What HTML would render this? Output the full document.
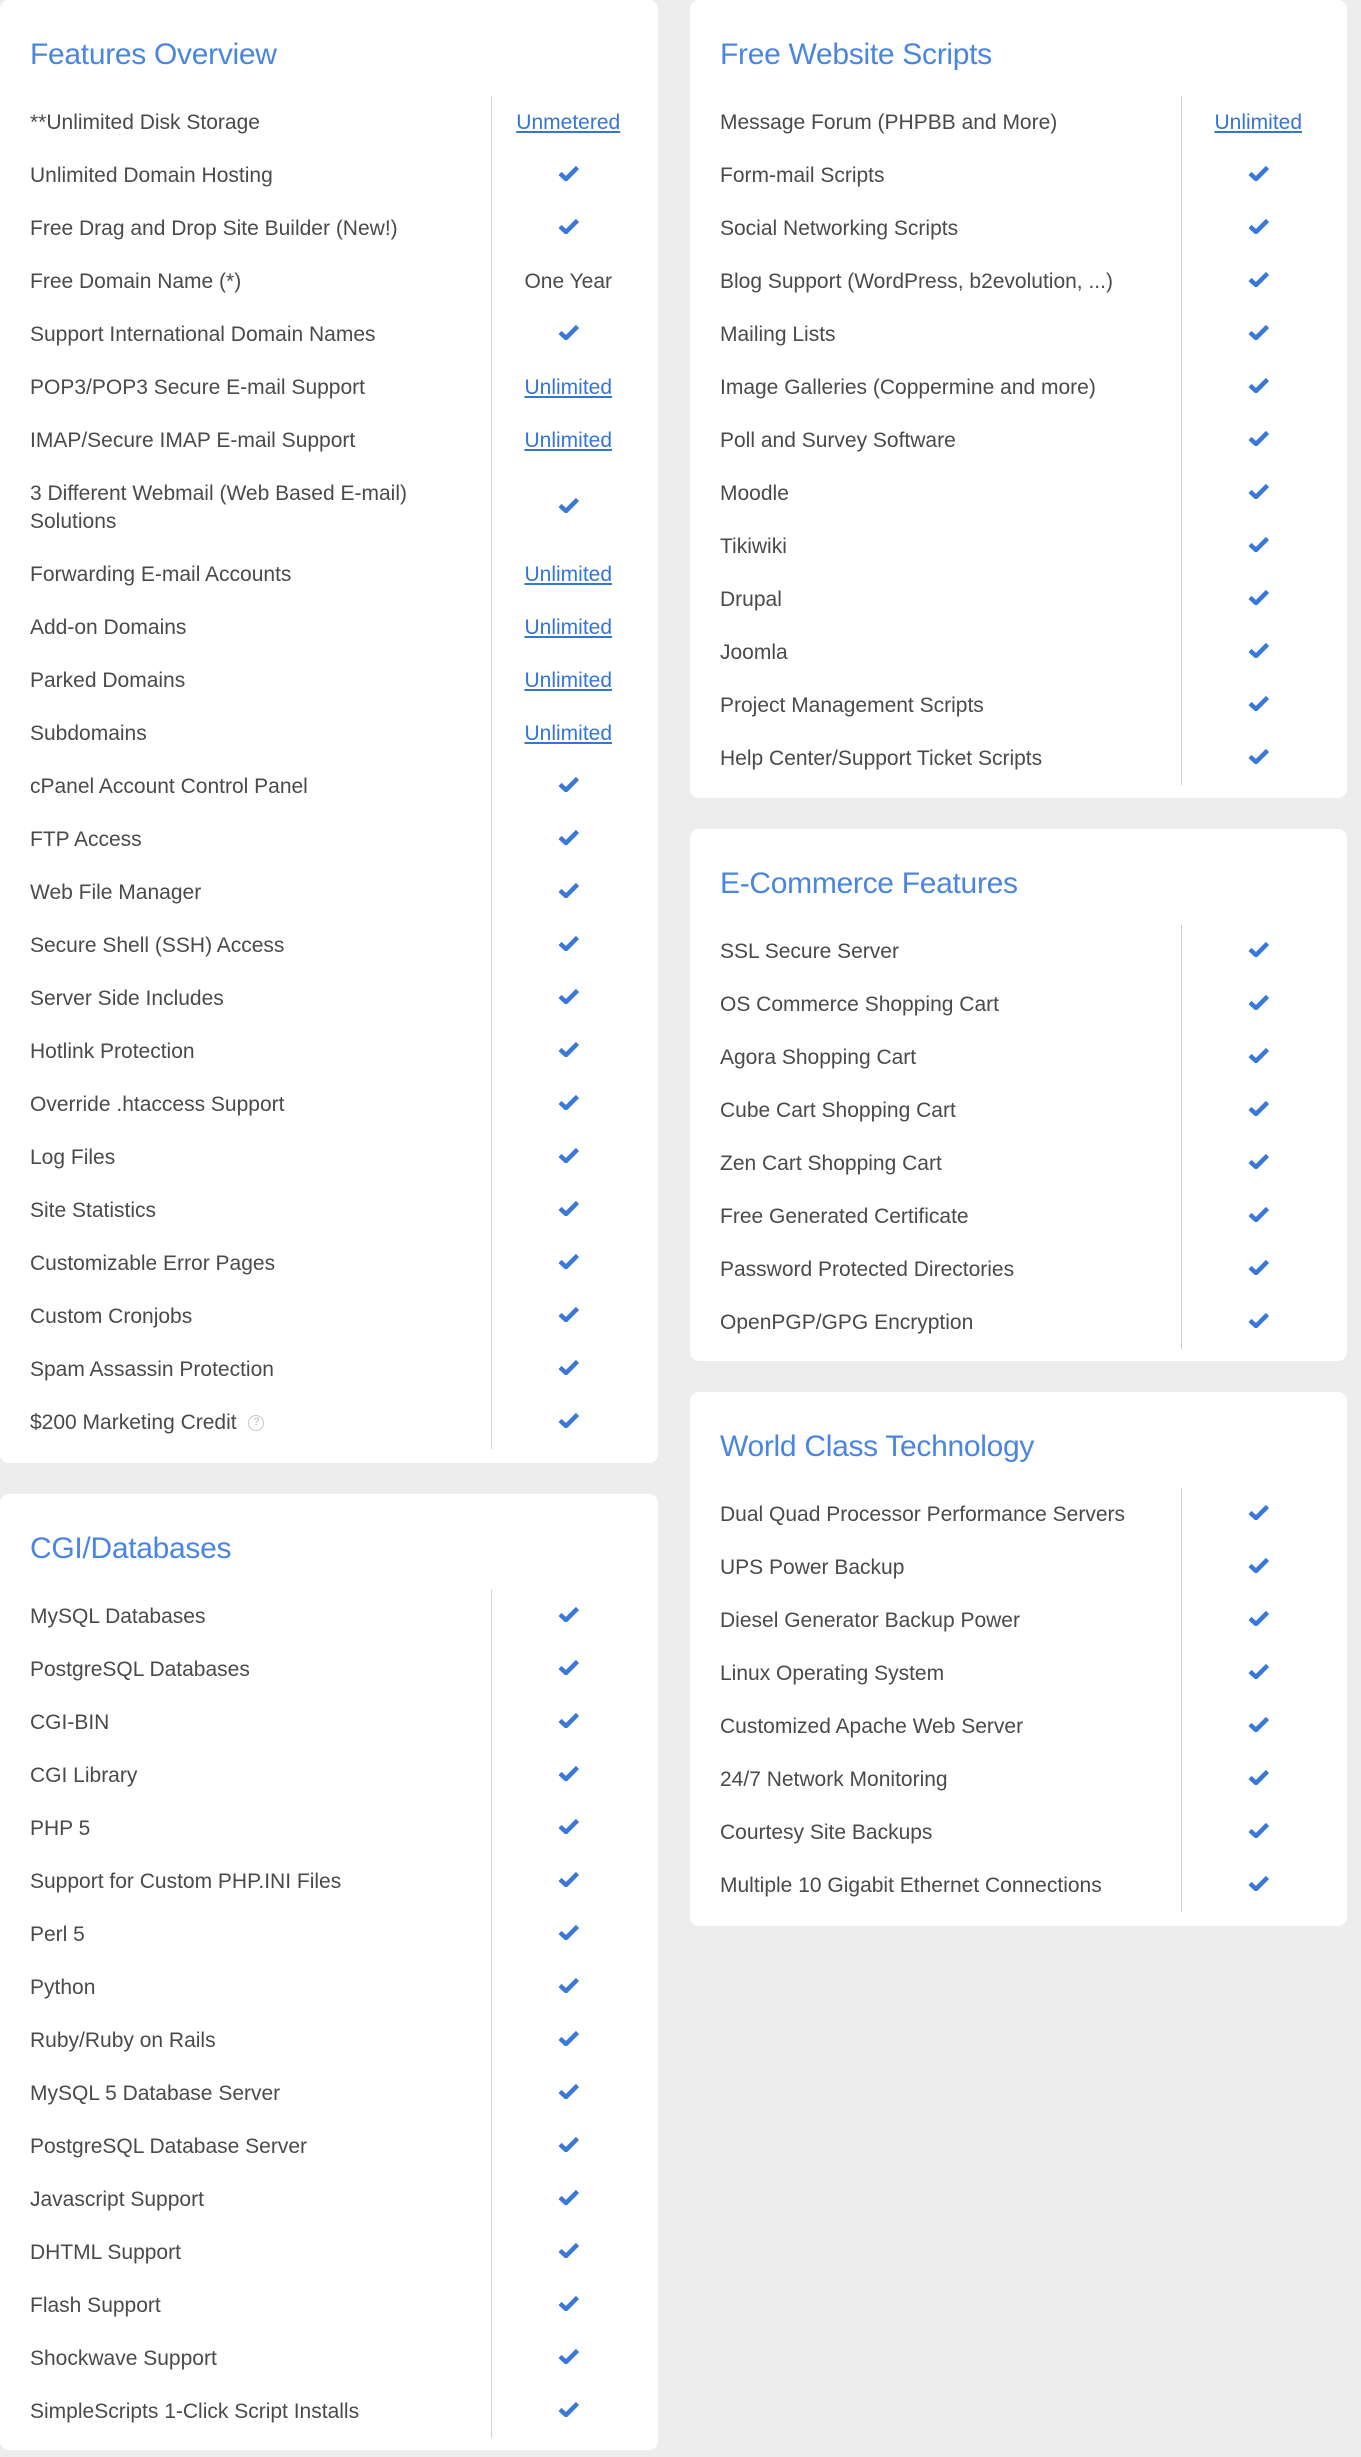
<!DOCTYPE html>
<html><head><meta charset="utf-8">
<style>
*{margin:0;padding:0;box-sizing:border-box}
html,body{width:1361px;height:2457px;background:#ededed;overflow:hidden}
body{position:relative;font-family:"Liberation Sans",sans-serif}
.card{position:absolute;background:#fff;border-radius:9px;width:658px;padding:30px 0 0 0}
.card h2{font-weight:normal;font-size:30px;color:#4a86e0;line-height:50px;height:50px;padding-left:30px;margin-bottom:16px;letter-spacing:-0.3px}
table{border-collapse:collapse;width:645px;table-layout:fixed}
td{font-size:21px;color:#4a4a4a;line-height:28px;padding:12.5px 0;vertical-align:middle}
td.l{padding-left:30px;width:491px;border-right:1px solid #d0d0d0;padding-right:20px}
td.v{text-align:center;width:154px}
a{color:#3575d3;text-decoration:underline}
.ck{display:inline-block;width:21px;height:16px;vertical-align:middle;position:relative;top:-3px}
.q{display:inline-block;width:16px;height:16px;border:1.5px solid #c8c8c8;border-radius:50%;font-size:11px;color:#bbb;text-align:center;line-height:13px;vertical-align:middle;margin-left:6px}
</style></head><body>
<svg width="0" height="0" style="position:absolute"><defs><symbol id="c" viewBox="0 0 21 16"><path d="M2 8.5 L8 14 L19.5 2.5" fill="none" stroke="#3a78d8" stroke-width="4.5" stroke-linejoin="miter"/></symbol></defs></svg>

<div class="card" style="left:0;top:0;height:1463px">
<h2>Features Overview</h2>
<table>
<tr><td class="l">**Unlimited Disk Storage</td><td class="v"><a>Unmetered</a></td></tr>
<tr><td class="l">Unlimited Domain Hosting</td><td class="v"><svg class="ck"><use href="#c"/></svg></td></tr>
<tr><td class="l">Free Drag and Drop Site Builder (New!)</td><td class="v"><svg class="ck"><use href="#c"/></svg></td></tr>
<tr><td class="l">Free Domain Name (*)</td><td class="v">One Year</td></tr>
<tr><td class="l">Support International Domain Names</td><td class="v"><svg class="ck"><use href="#c"/></svg></td></tr>
<tr><td class="l">POP3/POP3 Secure E-mail Support</td><td class="v"><a>Unlimited</a></td></tr>
<tr><td class="l">IMAP/Secure IMAP E-mail Support</td><td class="v"><a>Unlimited</a></td></tr>
<tr><td class="l">3 Different Webmail (Web Based E-mail) Solutions</td><td class="v"><svg class="ck"><use href="#c"/></svg></td></tr>
<tr><td class="l">Forwarding E-mail Accounts</td><td class="v"><a>Unlimited</a></td></tr>
<tr><td class="l">Add-on Domains</td><td class="v"><a>Unlimited</a></td></tr>
<tr><td class="l">Parked Domains</td><td class="v"><a>Unlimited</a></td></tr>
<tr><td class="l">Subdomains</td><td class="v"><a>Unlimited</a></td></tr>
<tr><td class="l">cPanel Account Control Panel</td><td class="v"><svg class="ck"><use href="#c"/></svg></td></tr>
<tr><td class="l">FTP Access</td><td class="v"><svg class="ck"><use href="#c"/></svg></td></tr>
<tr><td class="l">Web File Manager</td><td class="v"><svg class="ck"><use href="#c"/></svg></td></tr>
<tr><td class="l">Secure Shell (SSH) Access</td><td class="v"><svg class="ck"><use href="#c"/></svg></td></tr>
<tr><td class="l">Server Side Includes</td><td class="v"><svg class="ck"><use href="#c"/></svg></td></tr>
<tr><td class="l">Hotlink Protection</td><td class="v"><svg class="ck"><use href="#c"/></svg></td></tr>
<tr><td class="l">Override .htaccess Support</td><td class="v"><svg class="ck"><use href="#c"/></svg></td></tr>
<tr><td class="l">Log Files</td><td class="v"><svg class="ck"><use href="#c"/></svg></td></tr>
<tr><td class="l">Site Statistics</td><td class="v"><svg class="ck"><use href="#c"/></svg></td></tr>
<tr><td class="l">Customizable Error Pages</td><td class="v"><svg class="ck"><use href="#c"/></svg></td></tr>
<tr><td class="l">Custom Cronjobs</td><td class="v"><svg class="ck"><use href="#c"/></svg></td></tr>
<tr><td class="l">Spam Assassin Protection</td><td class="v"><svg class="ck"><use href="#c"/></svg></td></tr>
<tr><td class="l">$200 Marketing Credit <span class="q">?</span></td><td class="v"><svg class="ck"><use href="#c"/></svg></td></tr>
</table>
</div>

<div class="card" style="left:0;top:1494px;height:956px">
<h2>CGI/Databases</h2>
<table>
<tr><td class="l">MySQL Databases</td><td class="v"><svg class="ck"><use href="#c"/></svg></td></tr>
<tr><td class="l">PostgreSQL Databases</td><td class="v"><svg class="ck"><use href="#c"/></svg></td></tr>
<tr><td class="l">CGI-BIN</td><td class="v"><svg class="ck"><use href="#c"/></svg></td></tr>
<tr><td class="l">CGI Library</td><td class="v"><svg class="ck"><use href="#c"/></svg></td></tr>
<tr><td class="l">PHP 5</td><td class="v"><svg class="ck"><use href="#c"/></svg></td></tr>
<tr><td class="l">Support for Custom PHP.INI Files</td><td class="v"><svg class="ck"><use href="#c"/></svg></td></tr>
<tr><td class="l">Perl 5</td><td class="v"><svg class="ck"><use href="#c"/></svg></td></tr>
<tr><td class="l">Python</td><td class="v"><svg class="ck"><use href="#c"/></svg></td></tr>
<tr><td class="l">Ruby/Ruby on Rails</td><td class="v"><svg class="ck"><use href="#c"/></svg></td></tr>
<tr><td class="l">MySQL 5 Database Server</td><td class="v"><svg class="ck"><use href="#c"/></svg></td></tr>
<tr><td class="l">PostgreSQL Database Server</td><td class="v"><svg class="ck"><use href="#c"/></svg></td></tr>
<tr><td class="l">Javascript Support</td><td class="v"><svg class="ck"><use href="#c"/></svg></td></tr>
<tr><td class="l">DHTML Support</td><td class="v"><svg class="ck"><use href="#c"/></svg></td></tr>
<tr><td class="l">Flash Support</td><td class="v"><svg class="ck"><use href="#c"/></svg></td></tr>
<tr><td class="l">Shockwave Support</td><td class="v"><svg class="ck"><use href="#c"/></svg></td></tr>
<tr><td class="l">SimpleScripts 1-Click Script Installs</td><td class="v"><svg class="ck"><use href="#c"/></svg></td></tr>
</table>
</div>

<div class="card" style="left:690px;top:0;height:798px;width:657px">
<h2>Free Website Scripts</h2>
<table>
<tr><td class="l">Message Forum (PHPBB and More)</td><td class="v"><a>Unlimited</a></td></tr>
<tr><td class="l">Form-mail Scripts</td><td class="v"><svg class="ck"><use href="#c"/></svg></td></tr>
<tr><td class="l">Social Networking Scripts</td><td class="v"><svg class="ck"><use href="#c"/></svg></td></tr>
<tr><td class="l">Blog Support (WordPress, b2evolution, ...)</td><td class="v"><svg class="ck"><use href="#c"/></svg></td></tr>
<tr><td class="l">Mailing Lists</td><td class="v"><svg class="ck"><use href="#c"/></svg></td></tr>
<tr><td class="l">Image Galleries (Coppermine and more)</td><td class="v"><svg class="ck"><use href="#c"/></svg></td></tr>
<tr><td class="l">Poll and Survey Software</td><td class="v"><svg class="ck"><use href="#c"/></svg></td></tr>
<tr><td class="l">Moodle</td><td class="v"><svg class="ck"><use href="#c"/></svg></td></tr>
<tr><td class="l">Tikiwiki</td><td class="v"><svg class="ck"><use href="#c"/></svg></td></tr>
<tr><td class="l">Drupal</td><td class="v"><svg class="ck"><use href="#c"/></svg></td></tr>
<tr><td class="l">Joomla</td><td class="v"><svg class="ck"><use href="#c"/></svg></td></tr>
<tr><td class="l">Project Management Scripts</td><td class="v"><svg class="ck"><use href="#c"/></svg></td></tr>
<tr><td class="l">Help Center/Support Ticket Scripts</td><td class="v"><svg class="ck"><use href="#c"/></svg></td></tr>
</table>
</div>

<div class="card" style="left:690px;top:829px;height:532px;width:657px">
<h2>E-Commerce Features</h2>
<table>
<tr><td class="l">SSL Secure Server</td><td class="v"><svg class="ck"><use href="#c"/></svg></td></tr>
<tr><td class="l">OS Commerce Shopping Cart</td><td class="v"><svg class="ck"><use href="#c"/></svg></td></tr>
<tr><td class="l">Agora Shopping Cart</td><td class="v"><svg class="ck"><use href="#c"/></svg></td></tr>
<tr><td class="l">Cube Cart Shopping Cart</td><td class="v"><svg class="ck"><use href="#c"/></svg></td></tr>
<tr><td class="l">Zen Cart Shopping Cart</td><td class="v"><svg class="ck"><use href="#c"/></svg></td></tr>
<tr><td class="l">Free Generated Certificate</td><td class="v"><svg class="ck"><use href="#c"/></svg></td></tr>
<tr><td class="l">Password Protected Directories</td><td class="v"><svg class="ck"><use href="#c"/></svg></td></tr>
<tr><td class="l">OpenPGP/GPG Encryption</td><td class="v"><svg class="ck"><use href="#c"/></svg></td></tr>
</table>
</div>

<div class="card" style="left:690px;top:1392px;height:534px;width:657px">
<h2>World Class Technology</h2>
<table>
<tr><td class="l">Dual Quad Processor Performance Servers</td><td class="v"><svg class="ck"><use href="#c"/></svg></td></tr>
<tr><td class="l">UPS Power Backup</td><td class="v"><svg class="ck"><use href="#c"/></svg></td></tr>
<tr><td class="l">Diesel Generator Backup Power</td><td class="v"><svg class="ck"><use href="#c"/></svg></td></tr>
<tr><td class="l">Linux Operating System</td><td class="v"><svg class="ck"><use href="#c"/></svg></td></tr>
<tr><td class="l">Customized Apache Web Server</td><td class="v"><svg class="ck"><use href="#c"/></svg></td></tr>
<tr><td class="l">24/7 Network Monitoring</td><td class="v"><svg class="ck"><use href="#c"/></svg></td></tr>
<tr><td class="l">Courtesy Site Backups</td><td class="v"><svg class="ck"><use href="#c"/></svg></td></tr>
<tr><td class="l">Multiple 10 Gigabit Ethernet Connections</td><td class="v"><svg class="ck"><use href="#c"/></svg></td></tr>
</table>
</div>
</body></html>
